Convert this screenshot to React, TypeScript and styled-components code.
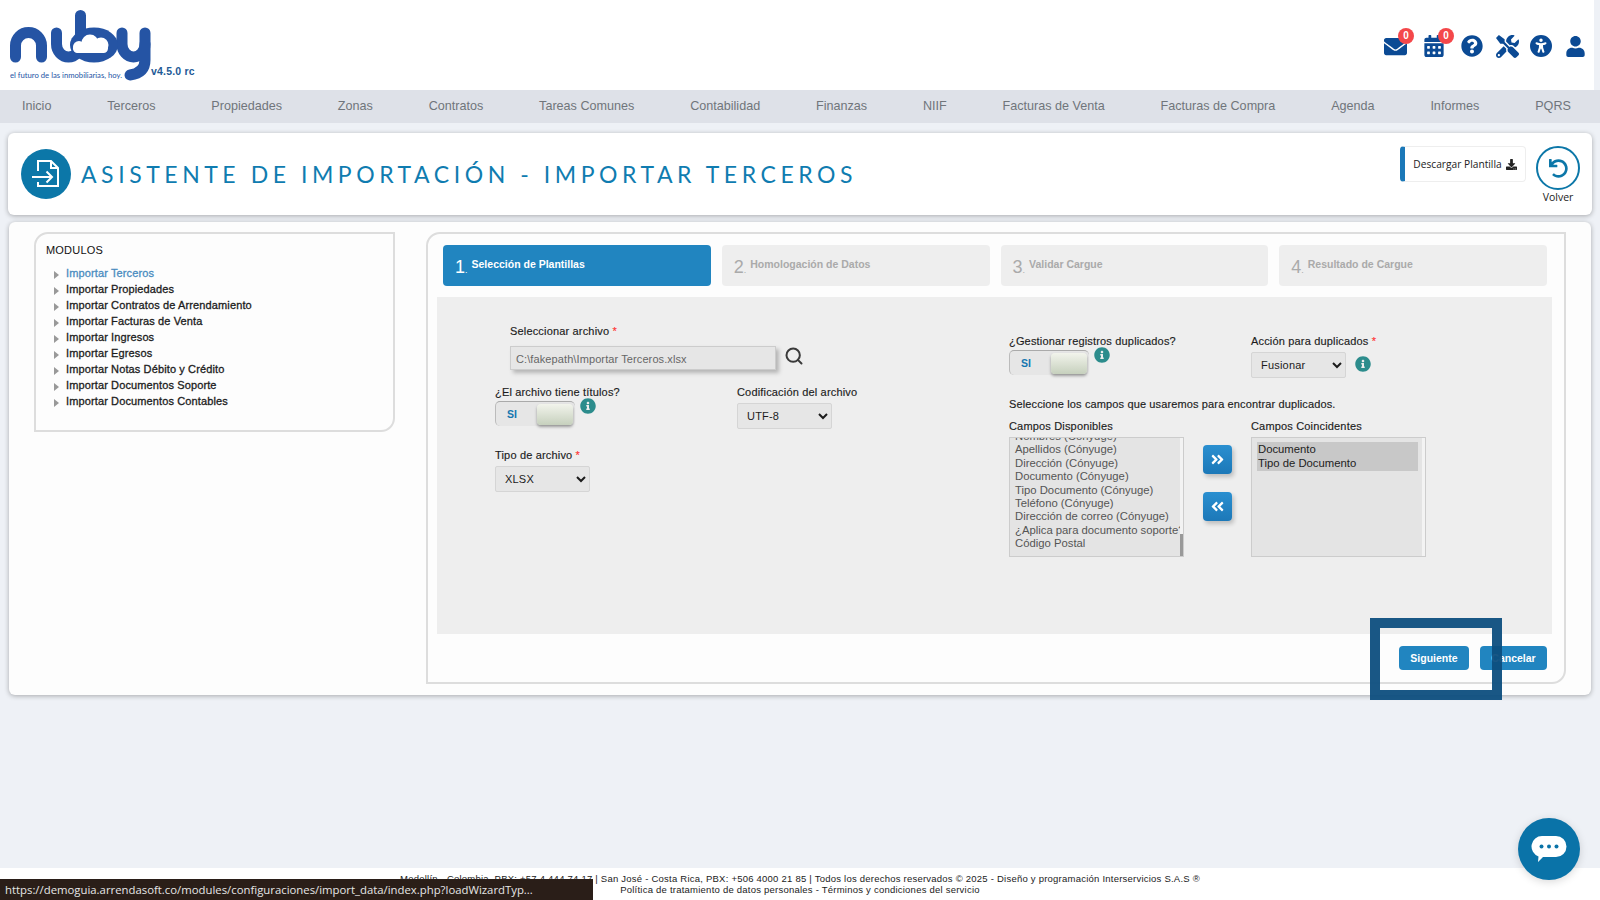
import React from "react";
import styled, { createGlobalStyle } from "styled-components";
import {
  FaEnvelope,
  FaCalendarAlt,
  FaQuestionCircle,
  FaTools,
  FaUser,
  FaDownload,
  FaInfoCircle,
  FaAngleDoubleRight,
  FaAngleDoubleLeft,
  FaUndo,
} from "react-icons/fa";
import { FaUniversalAccess } from "react-icons/fa6";
import { Search } from "lucide-react";

const GlobalStyle = createGlobalStyle`
  html, body {
    margin: 0;
    height: 100%;
    overflow: hidden;
    background: #eef1f6;
    font-family: "Liberation Sans", Arial, sans-serif;
  }
  * { box-sizing: border-box; }
`;

const Page = styled.div`
  position: relative;
  display: flex;
  flex-direction: column;
  height: 900px;
`;

const Header = styled.header`
  height: 90px;
  margin-right: 6px;
  padding-left: 10px;
  background: #fff;
  display: flex;
  align-items: flex-start;
  justify-content: space-between;
`;

const Brand = styled.div`
  display: flex;
  align-items: flex-start;
`;

const Version = styled.span`
  margin: 65px 0 0 -9px;
  font-size: 10.5px;
  font-weight: 700;
  letter-spacing: 0.2px;
  color: #1d5a96;
`;

const HeaderIcons = styled.div`
  display: flex;
  align-items: center;
  height: 92px;
  padding-right: 2px;
  color: #0b4a94;
`;

const IconSlot = styled.span<{ $w: number }>`
  position: relative;
  display: flex;
  justify-content: center;
  width: ${({ $w }) => $w}px;
`;

const Badge = styled.span`
  position: absolute;
  top: -7px;
  right: 0;
  width: 16px;
  height: 16px;
  border-radius: 50%;
  background: #f4474a;
  color: #fff;
  font-size: 10px;
  font-weight: 700;
  line-height: 16px;
  text-align: center;
`;

const Nav = styled.nav`
  height: 33px;
  padding: 0 29px 2px 22px;
  background: #dee1e8;
  display: flex;
  align-items: center;
  justify-content: space-between;
  font-size: 12.6px;
  color: #70757b;
`;

const Content = styled.main`
  flex: 1;
  padding: 10px 8px 0 8px;
`;

const Card = styled.section`
  background: #fff;
  border-radius: 6px;
  box-shadow: 0 1px 5px rgba(0, 0, 0, 0.3);
`;

const TitleCard = styled(Card)`
  height: 82px;
  padding: 0 12px 0 13px;
  display: flex;
  align-items: center;
  justify-content: space-between;
`;

const TitleLeft = styled.div`
  display: flex;
  align-items: center;
`;

const TitleIcon = styled.span`
  width: 50px;
  height: 50px;
  border-radius: 50%;
  background: #0c77a8;
  display: flex;
`;

const Title = styled.h1`
  margin: 0 0 0 10px;
  font-family: Lato, sans-serif;
  font-size: 23px;
  font-weight: 400;
  letter-spacing: 4.55px;
  color: #0f7cb0;
  white-space: nowrap;
`;

const TitleActions = styled.div`
  display: flex;
  align-items: flex-start;
  gap: 10px;
  align-self: flex-start;
  padding-top: 13px;
`;

const DownloadButton = styled.a`
  width: 126px;
  height: 36px;
  background: #fff;
  border: 1px solid #eee;
  border-left: 5px solid #1b78b8;
  border-radius: 4px;
  display: flex;
  align-items: center;
  justify-content: center;
  gap: 4px;
  font-family: "Open Sans", sans-serif;
  font-size: 10.2px;
  color: #222;
  white-space: nowrap;
`;

const BackAction = styled.div`
  display: flex;
  flex-direction: column;
  align-items: center;
  font-family: "Open Sans", sans-serif;
  font-size: 10.5px;
  color: #222;
`;

const BackCircle = styled.span`
  width: 44px;
  height: 44px;
  border: 2.5px solid #0c77a8;
  border-radius: 50%;
  display: flex;
  align-items: center;
  justify-content: center;
  color: #0c77a8;
`;

const MainCard = styled(Card)`
  margin: 7px 1px 0 1px;
  height: 473px;
  padding: 10px 25px 11px 25px;
  display: flex;
  gap: 31px;
  background: #fdfdfd;
`;

const Framed = styled.div`
  border: 2px solid #dddddd;
  border-radius: 14px 0 14px 0;
`;

const Sidebar = styled(Framed)`
  flex: none;
  width: 361px;
  height: 200px;
  padding: 9px 10px;
`;

const SidebarTitle = styled.div`
  font-size: 11px;
  line-height: 14px;
  letter-spacing: 0.2px;
  color: #111;
  margin-bottom: 8px;
`;

const ModuleList = styled.ul`
  list-style: none;
  margin: 0;
  padding: 0 0 0 8px;
`;

const ModuleItem = styled.li<{ $active?: boolean }>`
  display: flex;
  align-items: center;
  height: 16px;
  font-size: 11px;
  letter-spacing: 0.12px;
  -webkit-text-stroke: 0.3px currentColor;
  color: ${({ $active }) => ($active ? "#4a8cc0" : "#1c1c1c")};

  &:before {
    content: "";
    width: 0;
    height: 0;
    margin: 3px 7px 0 0;
    border-left: 5px solid #999;
    border-top: 4px solid transparent;
    border-bottom: 4px solid transparent;
  }
`;

const Wizard = styled(Framed)`
  flex: 1;
  padding: 11px 12px 0 9px;
  display: flex;
  flex-direction: column;
`;

const Steps = styled.div`
  display: grid;
  grid-template-columns: repeat(4, 1fr);
  gap: 11px;
  margin: 0 5px 0 6px;
`;

const Step = styled.div<{ $active?: boolean }>`
  height: 41px;
  padding: 0 12px;
  border-radius: 4px;
  background: ${({ $active }) => ($active ? "#2185c0" : "#eeeeee")};
  color: ${({ $active }) => ($active ? "#fff" : "#aaaaaa")};
  display: flex;
  align-items: center;
  gap: 4px;
  font-size: 10.5px;
  font-weight: 700;
`;

const StepNumber = styled.span`
  font-size: 18px;
  font-weight: 400;
  margin-top: 3px;

  &:after {
    content: ".";
    font-size: 9px;
  }
`;

const StepLabel = styled.span`
  margin-bottom: 3px;
`;

const Panel = styled.div`
  margin-top: 11px;
  height: 337px;
  padding-left: 58px;
  background: #eeeeee;
  display: grid;
  grid-template-columns: 514px 1fr;
`;

const LeftForm = styled.div`
  padding-top: 27px;
  display: grid;
  grid-template-columns: 242px 1fr;
  grid-template-rows: 61px 63px auto;
  align-content: start;
`;

const FileField = styled.div`
  grid-column: 1 / -1;
  padding-left: 15px;
`;

const Field = styled.div``;

const Label = styled.label<{ $required?: boolean }>`
  display: block;
  height: 16px;
  font-size: 11px;
  line-height: 14px;
  letter-spacing: 0.17px;
  -webkit-text-stroke: 0.15px currentColor;
  color: #1c1c1c;

  &:after {
    content: "${({ $required }) => ($required ? " *" : "")}";
    color: #f33;
  }
`;

const FileRow = styled.div`
  display: flex;
  align-items: center;
  gap: 8px;
  margin-top: 6px;
`;

const FileInput = styled.div`
  width: 266px;
  height: 24px;
  padding-left: 5px;
  background: #e6e6e6;
  border: 1px solid #ccc;
  box-shadow: 3px 3px 4px #b5b5b5;
  font-size: 11px;
  letter-spacing: 0.1px;
  line-height: 24px;
  color: #666;
`;

const SearchIcon = styled(Search)`
  margin-top: -4px;
  color: #3a3a3a;
`;

const ToggleRow = styled.div`
  display: flex;
  align-items: flex-start;
  gap: 5px;
`;

const Toggle = styled.div`
  position: relative;
  width: 80px;
  height: 25px;
  padding-left: 11px;
  background: #e6e6e6;
  border-top: 1px solid #aaa;
  border-left: 1px solid #bbb;
  border-radius: 5px;
  font-size: 10.5px;
  font-weight: 700;
  line-height: 24px;
  color: #1577b0;
`;

const Knob = styled.span`
  position: absolute;
  top: 2px;
  right: 2px;
  width: 36px;
  height: 21px;
  border-radius: 4px;
  background: linear-gradient(#f2f4ec, #c6d0bd);
  box-shadow: 0 2px 3px rgba(0, 0, 0, 0.35);
`;

const Info = styled.span<{ $raised?: boolean }>`
  display: inline-flex;
  margin-top: ${({ $raised }) => ($raised ? "-3px" : "0")};
  color: #2c8c8c;
`;

const Select = styled.select`
  display: block;
  width: 95px;
  height: 26px;
  margin-top: 2px;
  padding-left: 5px;
  background: #e6e6e6;
  border: 1px solid #d5d5d5;
  border-radius: 2px;
  font-family: inherit;
  font-size: 11px;
  letter-spacing: 0.2px;
  color: #1c1c1c;
`;

const RightForm = styled.div`
  padding-top: 37px;
`;

const TopFields = styled.div`
  display: grid;
  grid-template-columns: 242px 1fr;
`;

const SelectRow = styled.div`
  display: flex;
  align-items: center;
  gap: 9px;
`;

const Hint = styled.p`
  margin: 19px 0 8px;
  font-size: 11px;
  line-height: 14px;
  letter-spacing: 0.13px;
  -webkit-text-stroke: 0.15px currentColor;
  color: #1c1c1c;
`;

const Transfer = styled.div`
  display: grid;
  grid-template-columns: 175px 67px 175px;
`;

const ListBox = styled.div`
  position: relative;
  height: 120px;
  margin-top: 2px;
  padding: 0 5px;
  background: #e4e4e4;
  border: 1px solid #ccc;
  overflow: hidden;
  font-size: 11.3px;
  line-height: 13.4px;
  color: #555;

  &:after {
    content: "";
    position: absolute;
    top: 0;
    right: 0;
    bottom: 0;
    width: 3px;
    background: #f3f3f3;
  }
`;

const AvailableItems = styled.div`
  margin-top: -8px;
  white-space: nowrap;
`;

const ScrollThumb = styled.span`
  position: absolute;
  z-index: 1;
  right: 0;
  bottom: 0;
  width: 3px;
  height: 22px;
  background: #999;
`;

const SelectedItems = styled.div`
  margin-top: 4px;
  width: 161px;
  padding: 0 1px 1px;
  background: #c8c8c8;
  line-height: 14px;
  color: #222;
`;

const TransferButtons = styled.div`
  padding: 26px 0 0 19px;
  display: flex;
  flex-direction: column;
  gap: 18px;
`;

const MoveButton = styled.button`
  width: 29px;
  height: 29px;
  padding: 0;
  border: 0;
  border-radius: 4px;
  background: linear-gradient(#2a8fd0, #1c78b8);
  box-shadow: 2px 3px 4px rgba(0, 0, 0, 0.2);
  color: #fff;
  display: flex;
  align-items: center;
  justify-content: center;
`;

const WizardFooter = styled.div`
  display: flex;
  justify-content: flex-end;
  gap: 11px;
  margin: 12px 5px 0 0;
`;

const ActionButton = styled.button<{ $w: number }>`
  width: ${({ $w }) => $w}px;
  height: 24px;
  border: 0;
  border-radius: 4px;
  background: #2185c0;
  color: #fff;
  font-family: inherit;
  font-size: 10.5px;
  font-weight: 700;
`;

const Footer = styled.footer`
  height: 32px;
  padding-top: 5px;
  background: #fff;
  text-align: center;
  font-size: 9.5px;
  line-height: 11px;
  letter-spacing: 0.23px;
  color: #222;
`;

/* overlays: highlight from the tutorial, browser status bar, chat launcher */
const Highlight = styled.div`
  position: absolute;
  left: 1370px;
  top: 618px;
  width: 132px;
  height: 82px;
  border: 10px solid rgba(13, 78, 126, 0.95);
`;

const StatusBar = styled.div`
  position: absolute;
  left: 0;
  bottom: 0;
  width: 593px;
  height: 21px;
  padding-left: 5px;
  background: #2a1e18;
  font-family: "Open Sans", sans-serif;
  font-size: 11.35px;
  line-height: 21px;
  color: #e6e6e6;
  white-space: nowrap;
`;

const ChatButton = styled.div`
  position: absolute;
  left: 1518px;
  top: 818px;
  width: 62px;
  height: 62px;
  border-radius: 50%;
  background: #0a73a8;
  box-shadow: 0 2px 8px rgba(0, 0, 0, 0.15);
  display: flex;
  align-items: center;
  justify-content: center;
`;

const NAV_ITEMS = [
  "Inicio", "Terceros", "Propiedades", "Zonas", "Contratos", "Tareas Comunes", "Contabilidad",
  "Finanzas", "NIIF", "Facturas de Venta", "Facturas de Compra", "Agenda", "Informes", "PQRS",
];

const MODULES = [
  "Importar Terceros", "Importar Propiedades", "Importar Contratos de Arrendamiento",
  "Importar Facturas de Venta", "Importar Ingresos", "Importar Egresos",
  "Importar Notas Débito y Crédito", "Importar Documentos Soporte", "Importar Documentos Contables",
];

const STEPS = ["Selección de Plantillas", "Homologación de Datos", "Validar Cargue", "Resultado de Cargue"];

const AVAILABLE = [
  "Nombres (Cónyuge)", "Apellidos (Cónyuge)", "Dirección (Cónyuge)", "Documento (Cónyuge)",
  "Tipo Documento (Cónyuge)", "Teléfono (Cónyuge)", "Dirección de correo (Cónyuge)",
  "¿Aplica para documento soporte?", "Código Postal",
];

const Logo = () => (
  <svg width="150" height="84" viewBox="10 0 150 84">
    <g fill="none" stroke="#2554a4" strokeWidth="11" strokeLinecap="round">
      <path d="M15.500 57V45.500a13 13 0 0 1 26 0V57" />
      <path d="M56.500 33V44a12 13 0 0 0 24 0V15.500" />
      <path d="M122 33V44a11.500 13 0 0 0 23 0" />
      <path d="M145 33V60q0 13-15 15" />
    </g>
    <ellipse cx="94" cy="45" rx="24" ry="17.500" fill="#2554a4" />
    <g fill="#fff">
      <circle cx="90" cy="43" r="8.500" />
      <circle cx="79" cy="47" r="6" />
      <circle cx="101" cy="45" r="7.500" />
      <rect x="73" y="44" width="35" height="9" rx="4.500" />
    </g>
    <text x="10" y="77.500" fontFamily="Lato, sans-serif" fontSize="7.500" textLength="112" lengthAdjust="spacingAndGlyphs" fill="#2554a4">
      el futuro de las inmobiliarias, hoy.
    </text>
  </svg>
);

const ImportIcon = () => (
  <svg width="50" height="50" viewBox="0 0 50 50" fill="none" stroke="#fff" strokeWidth="2">
    <path d="M17 22V12h13l7 7v18H17v-4" />
    <path d="M30 12v7h7" />
    <path d="M11 28h20M25.500 22.500 31 28l-5.500 5.500" />
  </svg>
);

const ChatIcon = () => (
  <svg width="36" height="28" viewBox="0 0 36 28">
    <path d="M11 1h14a10.500 10.500 0 0 1 0 21H12l-5 5 .5-5.600A10.500 10.500 0 0 1 11 1z" fill="#fff" />
    <circle cx="10.500" cy="11.500" r="2" fill="#0a73a8" />
    <circle cx="18" cy="11.500" r="2" fill="#0a73a8" />
    <circle cx="25.500" cy="11.500" r="2" fill="#0a73a8" />
  </svg>
);

const SwitchField = () => (
  <ToggleRow>
    <Toggle>
      SI
      <Knob />
    </Toggle>
    <Info $raised>
      <FaInfoCircle size={16} />
    </Info>
  </ToggleRow>
);

const App: React.FC = () => {
  return (
    <Page>
      <GlobalStyle />
      <Header>
        <Brand>
          <Logo />
          <Version>v4.5.0 rc</Version>
        </Brand>
        <HeaderIcons>
          <IconSlot $w={38}>
            <FaEnvelope size={23} />
            <Badge>0</Badge>
          </IconSlot>
          <IconSlot $w={40}>
            <FaCalendarAlt size={22} />
            <Badge>0</Badge>
          </IconSlot>
          <IconSlot $w={36}>
            <FaQuestionCircle size={22} />
          </IconSlot>
          <IconSlot $w={34}>
            <FaTools size={23} />
          </IconSlot>
          <IconSlot $w={34}>
            <FaUniversalAccess size={22} />
          </IconSlot>
          <IconSlot $w={34}>
            <FaUser size={21} />
          </IconSlot>
        </HeaderIcons>
      </Header>
      <Nav>
        {NAV_ITEMS.map((item) => (
          <span key={item}>{item}</span>
        ))}
      </Nav>
      <Content>
        <TitleCard>
          <TitleLeft>
            <TitleIcon>
              <ImportIcon />
            </TitleIcon>
            <Title>ASISTENTE DE IMPORTACIÓN - IMPORTAR TERCEROS</Title>
          </TitleLeft>
          <TitleActions>
            <DownloadButton>
              Descargar Plantilla <FaDownload size={11} />
            </DownloadButton>
            <BackAction>
              <BackCircle>
                <FaUndo size={19} />
              </BackCircle>
              Volver
            </BackAction>
          </TitleActions>
        </TitleCard>
        <MainCard>
          <Sidebar>
            <SidebarTitle>MODULOS</SidebarTitle>
            <ModuleList>
              {MODULES.map((item, i) => (
                <ModuleItem key={item} $active={i === 0}>
                  {item}
                </ModuleItem>
              ))}
            </ModuleList>
          </Sidebar>
          <Wizard>
            <Steps>
              {STEPS.map((label, i) => (
                <Step key={label} $active={i === 0}>
                  <StepNumber>{i + 1}</StepNumber>
                  <StepLabel>{label}</StepLabel>
                </Step>
              ))}
            </Steps>
            <Panel>
              <LeftForm>
                <FileField>
                  <Label $required>Seleccionar archivo</Label>
                  <FileRow>
                    <FileInput>C:\fakepath\Importar Terceros.xlsx</FileInput>
                    <SearchIcon size={20} strokeWidth={2.4} />
                  </FileRow>
                </FileField>
                <Field>
                  <Label>¿El archivo tiene títulos?</Label>
                  <SwitchField />
                </Field>
                <Field>
                  <Label>Codificación del archivo</Label>
                  <Select defaultValue="UTF-8">
                    <option>UTF-8</option>
                  </Select>
                </Field>
                <Field>
                  <Label $required>Tipo de archivo</Label>
                  <Select defaultValue="XLSX">
                    <option>XLSX</option>
                  </Select>
                </Field>
              </LeftForm>
              <RightForm>
                <TopFields>
                  <Field>
                    <Label>¿Gestionar registros duplicados?</Label>
                    <SwitchField />
                  </Field>
                  <Field>
                    <Label $required>Acción para duplicados</Label>
                    <SelectRow>
                      <Select defaultValue="Fusionar">
                        <option>Fusionar</option>
                      </Select>
                      <Info>
                        <FaInfoCircle size={16} />
                      </Info>
                    </SelectRow>
                  </Field>
                </TopFields>
                <Hint>Seleccione los campos que usaremos para encontrar duplicados.</Hint>
                <Transfer>
                  <Field>
                    <Label>Campos Disponibles</Label>
                    <ListBox>
                      <AvailableItems>
                        {AVAILABLE.map((item) => (
                          <div key={item}>{item}</div>
                        ))}
                      </AvailableItems>
                      <ScrollThumb />
                    </ListBox>
                  </Field>
                  <TransferButtons>
                    <MoveButton>
                      <FaAngleDoubleRight size={15} />
                    </MoveButton>
                    <MoveButton>
                      <FaAngleDoubleLeft size={15} />
                    </MoveButton>
                  </TransferButtons>
                  <Field>
                    <Label>Campos Coincidentes</Label>
                    <ListBox>
                      <SelectedItems>
                        <div>Documento</div>
                        <div>Tipo de Documento</div>
                      </SelectedItems>
                    </ListBox>
                  </Field>
                </Transfer>
              </RightForm>
            </Panel>
            <WizardFooter>
              <ActionButton $w={70}>Siguiente</ActionButton>
              <ActionButton $w={67}>Cancelar</ActionButton>
            </WizardFooter>
          </Wizard>
        </MainCard>
      </Content>
      <Footer>
        <div>
          Medellín - Colombia, PBX: +57 4 444 74 17 | San José - Costa Rica, PBX: +506 4000 21 85 | Todos los derechos
          reservados © 2025 - Diseño y programación Interservicios S.A.S ®
        </div>
        <div>Política de tratamiento de datos personales - Términos y condiciones del servicio</div>
      </Footer>
      <Highlight />
      <StatusBar>https://demoguia.arrendasoft.co/modules/configuraciones/import_data/index.php?loadWizardTyp...</StatusBar>
      <ChatButton>
        <ChatIcon />
      </ChatButton>
    </Page>
  );
};

export default App;
